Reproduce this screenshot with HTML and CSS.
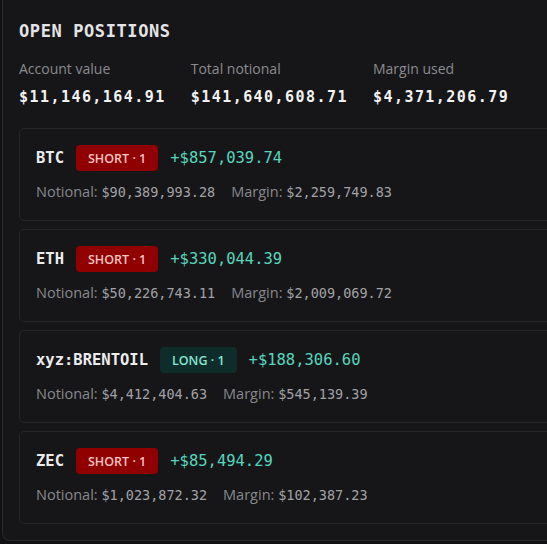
FILE: index.html
```html
<!DOCTYPE html>
<html lang="en">
<head>
<meta charset="utf-8">
<title>Open positions</title>
<link rel="stylesheet" href="styles.css">
</head>
<body>
<section class="panel">
  <h2 class="title">OPEN POSITIONS</h2>
  <div class="summary">
    <div class="stat">
      <div class="stat-label">Account value</div>
      <div class="stat-value">$11,146,164.91</div>
    </div>
    <div class="stat">
      <div class="stat-label">Total notional</div>
      <div class="stat-value">$141,640,608.71</div>
    </div>
    <div class="stat">
      <div class="stat-label">Margin used</div>
      <div class="stat-value">$4,371,206.79</div>
    </div>
  </div>
  <div class="list">
    <div class="card">
      <div class="row-top">
        <span class="ticker">BTC</span>
        <span class="badge short">SHORT · 1</span>
        <span class="pnl">+$857,039.74</span>
      </div>
      <div class="row-detail">
        <span class="detail"><span class="dl">Notional:</span> <span class="dv">$90,389,993.28</span></span>
        <span class="detail"><span class="dl">Margin:</span> <span class="dv">$2,259,749.83</span></span>
      </div>
    </div>
    <div class="card">
      <div class="row-top">
        <span class="ticker">ETH</span>
        <span class="badge short">SHORT · 1</span>
        <span class="pnl">+$330,044.39</span>
      </div>
      <div class="row-detail">
        <span class="detail"><span class="dl">Notional:</span> <span class="dv">$50,226,743.11</span></span>
        <span class="detail"><span class="dl">Margin:</span> <span class="dv">$2,009,069.72</span></span>
      </div>
    </div>
    <div class="card">
      <div class="row-top">
        <span class="ticker">xyz:BRENTOIL</span>
        <span class="badge long">LONG · 1</span>
        <span class="pnl">+$188,306.60</span>
      </div>
      <div class="row-detail">
        <span class="detail"><span class="dl">Notional:</span> <span class="dv">$4,412,404.63</span></span>
        <span class="detail"><span class="dl">Margin:</span> <span class="dv">$545,139.39</span></span>
      </div>
    </div>
    <div class="card">
      <div class="row-top">
        <span class="ticker">ZEC</span>
        <span class="badge short">SHORT · 1</span>
        <span class="pnl">+$85,494.29</span>
      </div>
      <div class="row-detail">
        <span class="detail"><span class="dl">Notional:</span> <span class="dv">$1,023,872.32</span></span>
        <span class="detail"><span class="dl">Margin:</span> <span class="dv">$102,387.23</span></span>
      </div>
    </div>
  </div>
</section>
</body>
</html>
```

FILE: styles.css
```css
html, body {
  margin: 0;
  padding: 0;
  background: #111113;
  overflow: hidden;
}

body {
  font-family: "Open Sans", "Noto Sans", sans-serif;
}

.panel {
  box-sizing: border-box;
  width: 620px;
  margin-left: 2px;
  padding: 19px 16px 16px 16px;
  background: #161618;
  border: 1px solid #2a2a2d;
  border-top: none;
  border-radius: 0 0 8px 8px;
}

.title {
  margin: 0;
  font-family: "DejaVu Sans Mono", monospace;
  font-size: 17px;
  font-weight: bold;
  letter-spacing: 0.6px;
  line-height: 24px;
  color: #e4e4e6;
}

.summary {
  display: flex;
  gap: 25px;
  margin-top: 16px;
}

.stat-label {
  font-size: 14px;
  line-height: 20px;
  color: #8b8b8f;
}

.stat-value {
  margin-top: 8px;
  font-family: "DejaVu Sans Mono", monospace;
  font-size: 15px;
  font-weight: bold;
  letter-spacing: 1.45px;
  line-height: 20px;
  color: #f2f2f3;
}

.list {
  display: flex;
  flex-direction: column;
  gap: 8px;
  margin-top: 21px;
}

.card {
  border: 1px solid #262629;
  border-radius: 5px;
  background: #161619;
  padding: 16px 16px 17px 16px;
}

.row-top {
  display: flex;
  align-items: center;
  gap: 12px;
  height: 26px;
}

.ticker {
  font-family: "DejaVu Sans Mono", monospace;
  font-size: 15.5px;
  font-weight: bold;
  color: #ececee;
}

.badge {
  display: inline-flex;
  align-items: center;
  height: 26px;
  padding: 0 12px;
  border-radius: 4px;
  font-size: 12.5px;
  font-weight: 600;
}

.badge.short {
  background: #900000;
  color: #f5c4c4;
}

.badge.long {
  background: #0e2d2a;
  color: #86e6d2;
}

.pnl {
  font-family: "DejaVu Sans Mono", monospace;
  font-size: 15.5px;
  color: #55d6bd;
}

.row-detail {
  display: flex;
  gap: 16px;
  margin-top: 10px;
  height: 22px;
  line-height: 22px;
  font-size: 14.5px;
  overflow: hidden;
}

.detail {
  white-space: nowrap;
}

.dl {
  color: #88888c;
}

.dv {
  font-family: "DejaVu Sans Mono", monospace;
  font-size: 13.5px;
  line-height: 1;
  color: #a2a2a6;
}
```
